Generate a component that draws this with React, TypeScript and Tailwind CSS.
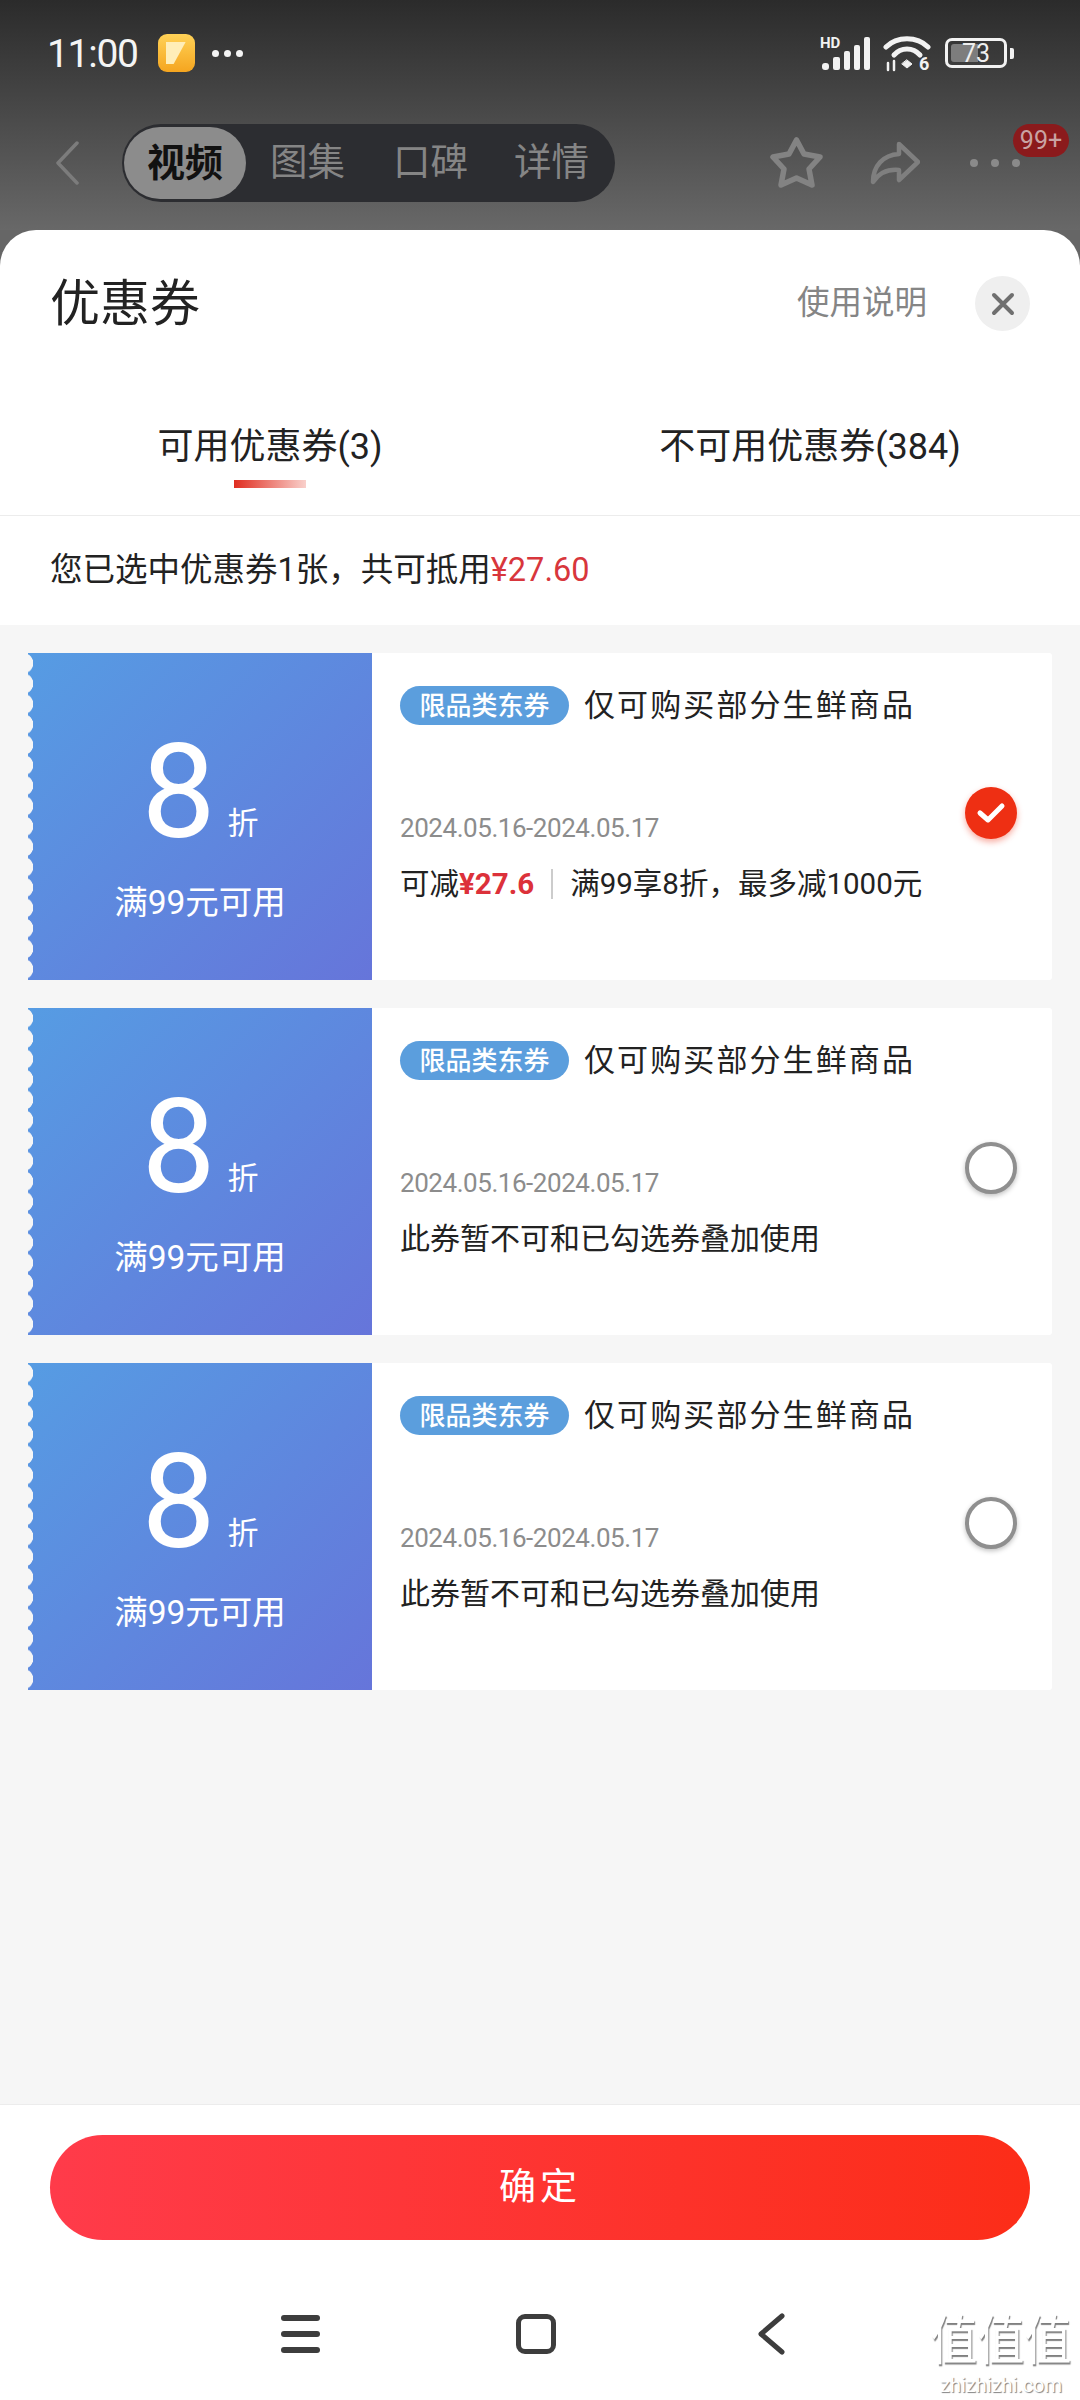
const coupons = [
  { id: 1, checked: true },
  { id: 2, checked: false },
  { id: 3, checked: false },
];

const StatusIcons = () => (
  <div className="flex items-center">
    <svg width="52" height="36" viewBox="0 0 52 36" className="mr-[11px]">
      <text x="0" y="13" fill="#f2f2f2" fontSize="15" fontWeight="700" fontFamily="Roboto, sans-serif">HD</text>
      <rect x="2" y="28" width="7" height="7" rx="3" fill="#f2f2f2" />
      <rect x="13" y="22" width="7" height="13" rx="2" fill="#f2f2f2" />
      <rect x="24" y="16" width="6" height="19" rx="2" fill="#f2f2f2" />
      <rect x="34" y="10" width="6" height="25" rx="2" fill="#f2f2f2" />
      <rect x="44" y="2" width="6" height="33" rx="2" fill="#f2f2f2" />
    </svg>
    <svg width="48" height="42" viewBox="0 0 48 42" className="mt-[6px] mr-[14px]" fill="none" stroke="#f2f2f2" strokeLinecap="round">
      <path d="M3 12 C14 1 34 1 45 12" strokeWidth="5" />
      <path d="M11 20 C18 12 30 12 37 20" strokeWidth="5" />
      <path d="M24 25 l5 4 -5 4 -5 -4z" fill="#f2f2f2" strokeWidth="1" />
      <path d="M5 28v7M11 26v9" strokeWidth="2.5" />
      <text x="36" y="35" fill="#f2f2f2" stroke="none" fontSize="18" fontWeight="700" fontFamily="Roboto, sans-serif">6</text>
    </svg>
    <div className="relative flex h-[30px] w-[62px] items-center justify-center rounded-[7px] border-[3px] border-[#f2f2f2]">
      <div className="absolute top-[3px] bottom-[3px] left-[3px] w-[27px] rounded-l-[3px] bg-[#7d7d7d]" />
      <span className="relative text-[25px] leading-none text-[#eeeeee]">73</span>
    </div>
    <div className="ml-[3px] h-[11px] w-[4px] rounded-r-[2px] bg-[#f2f2f2]" />
  </div>
);

const Coupon = ({ checked }: { checked: boolean }) => (
  <div className="flex h-[327px] rounded-[3px] bg-white">
    <div className="relative flex w-[344px] shrink-0 flex-col items-center bg-[linear-gradient(135deg,#569ce3,#6675da)] text-white">
      <div className="absolute top-0 bottom-0 left-0 w-[6px] bg-[radial-gradient(circle_at_-5px_50%,#f6f6f6_10px,transparent_10.5px)] bg-[length:6px_20.4px]" />
      <div className="mt-[74px] flex h-[130px] items-end">
        <span className="text-[132px] leading-[130px]">8</span>
        <span className="mb-[13px] ml-[12px] text-[31px] leading-[40px]">折</span>
      </div>
      <span className="mt-[24px] text-[33.5px] leading-[44px]">满99元可用</span>
    </div>
    <div className="flex flex-1 items-center">
      <div className="h-full flex-1 pt-[33px] pl-[28px]">
        <div className="flex items-center">
          <span className="flex h-[39px] w-[169px] items-center justify-center rounded-full bg-[#5b9edd] text-[26px] font-medium leading-none text-white">限品类东券</span>
          <span className="ml-[15px] text-[31px] leading-[39px] tracking-[2.1px] text-[#222222]">仅可购买部分生鲜商品</span>
        </div>
        <div className="mt-[85px] text-[26px] leading-[36px] tracking-[-0.45px] text-[#8c8c8c]">2024.05.16-2024.05.17</div>
        {checked ? (
          <div className="mt-[20px] flex items-center text-[29.5px] leading-[36px] text-[#222222]">
            <span>可减</span>
            <span className="font-bold text-[#dc313a]">¥27.6</span>
            <span className="mx-[17px] h-[30px] w-[2px] bg-[#cccccc]" />
            <span>满99享8折，最多减1000元</span>
          </div>
        ) : (
          <div className="mt-[20px] text-[30px] leading-[36px] text-[#222222]">此券暂不可和已勾选券叠加使用</div>
        )}
      </div>
      {checked ? (
        <div className="mr-[35px] mb-[8px] flex h-[52px] w-[52px] items-center justify-center rounded-full bg-[#ee2f13] shadow-[0_3px_6px_rgba(238,47,19,0.4)]">
          <svg width="30" height="24" viewBox="0 0 30 24" fill="none" stroke="#fff" strokeWidth="5" strokeLinecap="round" strokeLinejoin="round">
            <path d="M4 12 L12 19 L26 5" />
          </svg>
        </div>
      ) : (
        <div className="mr-[35px] mb-[8px] h-[52px] w-[52px] rounded-full border-[4px] border-[#8f8f8f] bg-white shadow-[0_2px_5px_rgba(0,0,0,0.25)]" />
      )}
    </div>
  </div>
);

export default function App() {
  return (
    <div className="relative flex h-[2400px] w-[1080px] flex-col overflow-hidden bg-[#666666] font-['Roboto','Noto_Sans_CJK_SC',sans-serif]">
      {/* top of the page behind the sheet */}
      <div className="h-[230px] shrink-0 bg-[linear-gradient(180deg,#2b2b2b,#686868)]">
        <div className="flex h-[106px] items-center justify-between pr-[66px] pl-[47px]">
          <div className="flex items-center">
            <span className="mt-[2px] text-[39px] leading-none tracking-[-1.3px] text-[#f4f4f4]">11:00</span>
            <div className="relative ml-[20px] h-[38px] w-[37px] overflow-hidden rounded-[9px] bg-[linear-gradient(180deg,#ffd257,#f5a51f)]">
              <div className="absolute top-[8px] left-[8px] h-[22px] w-[20px] bg-[#ffeeb8] [clip-path:polygon(0_0,100%_0,40%_100%,0_100%)]" />
            </div>
            <div className="ml-[17px] flex gap-[5px]">
              <div className="h-[7px] w-[7px] rounded-full bg-[#f4f4f4]" />
              <div className="h-[7px] w-[7px] rounded-full bg-[#f4f4f4]" />
              <div className="h-[7px] w-[7px] rounded-full bg-[#f4f4f4]" />
            </div>
          </div>
          <StatusIcons />
        </div>

        <div className="relative mt-[18px] flex h-[78px] items-center pl-[55px]">
          <svg width="24" height="44" viewBox="0 0 24 44" fill="none" stroke="#7c7c7c" strokeWidth="3.5" strokeLinecap="round" strokeLinejoin="round">
            <path d="M22 2 L3 22 L22 42" />
          </svg>
          <div className="ml-[43px] flex h-[78px] w-[493px] items-center rounded-full bg-[#2c2d31] pl-[2px] text-[37.5px] leading-none text-[#858585]">
            <span className="flex h-[72px] w-[122px] items-center justify-center rounded-full bg-[#8c8c8c] text-[38px] font-bold text-[#111111]">视频</span>
            <span className="ml-[24px]">图集</span>
            <span className="ml-[48px]">口碑</span>
            <span className="ml-[46px]">详情</span>
          </div>
          <svg width="55" height="54" viewBox="0 0 55 54" className="ml-[154px]" fill="none" stroke="#838383" strokeWidth="5.5" strokeLinejoin="round">
            <path d="M27.5 4 L35 18 L51 21 L40 33 L43 49 L27.5 42 L12 49 L15 33 L4 21 L20 18 Z" />
          </svg>
          <svg width="50" height="44" viewBox="0 0 50 44" className="ml-[46px]" fill="none" stroke="#7f7f7f" strokeWidth="4.5" strokeLinejoin="round" strokeLinecap="round">
            <path d="M29 3 L48 21 L29 39 L29 29 C18 28 9 32 3 41 C3 25 13 14 29 13 Z" />
          </svg>
          <div className="ml-[50px] flex gap-[13px]">
            <div className="h-[8px] w-[8px] rounded-full bg-[#8a8a8a]" />
            <div className="h-[8px] w-[8px] rounded-full bg-[#8a8a8a]" />
            <div className="h-[8px] w-[8px] rounded-full bg-[#8a8a8a]" />
          </div>
          <span className="absolute top-0 right-[11px] flex h-[33px] w-[56px] items-center justify-center rounded-full bg-[#8b1a1c] text-[25px] leading-none text-[#c9a3a3]">99+</span>
        </div>
      </div>

      {/* coupon sheet */}
      <div className="flex flex-1 flex-col overflow-hidden rounded-t-[36px] bg-white">
        <div className="flex h-[147px] shrink-0 items-center px-[50px]">
          <span className="text-[50px] leading-none text-[#222222]">优惠券</span>
          <span className="mr-[48px] ml-auto text-[32.5px] leading-none text-[#858585]">使用说明</span>
          <div className="flex h-[55px] w-[55px] items-center justify-center rounded-full bg-[#efefef]">
            <svg width="24" height="24" viewBox="0 0 24 24" fill="none" stroke="#6f6f6f" strokeWidth="4" strokeLinecap="round">
              <path d="M3 3 L21 21 M21 3 L3 21" />
            </svg>
          </div>
        </div>

        <div className="grid h-[139px] shrink-0 grid-cols-2 border-b border-[#ececec] text-[36px] leading-[48px] text-[#222222]">
          <div className="flex flex-col items-center pt-[46px]">
            <span>可用优惠券(3)</span>
            <div className="mt-[9px] h-[8px] w-[72px] bg-[linear-gradient(90deg,#e02d20,#f9d0cb)]" />
          </div>
          <div className="flex flex-col items-center pt-[46px]">
            <span>不可用优惠券(384)</span>
          </div>
        </div>

        <div className="flex h-[109px] shrink-0 items-center pl-[50px] text-[32.5px] leading-none text-[#222222]">
          <span>您已选中优惠券1张，共可抵用</span>
          <span className="text-[#d8363c]">¥27.60</span>
        </div>

        <div className="flex flex-1 flex-col gap-[28px] bg-[#f6f6f6] px-[28px] pt-[28px]">
          {coupons.map((c) => (
            <Coupon key={c.id} checked={c.checked} />
          ))}
        </div>

        <div className="h-[296px] shrink-0 border-t border-[#ececec] bg-white px-[50px] pt-[30px]">
          <div className="flex h-[105px] items-center justify-center rounded-full bg-[linear-gradient(90deg,#ff3b4a,#fc2d18)] text-[37px] leading-none tracking-[4px] text-white">确定</div>
          <div className="mt-[73px] flex items-center pl-[231px]">
            <div className="flex w-[39px] flex-col gap-[10px]">
              <div className="h-[6px] rounded-full bg-[#3d3d3d]" />
              <div className="h-[6px] rounded-full bg-[#3d3d3d]" />
              <div className="h-[6px] rounded-full bg-[#3d3d3d]" />
            </div>
            <div className="ml-[196px] h-[40px] w-[40px] rounded-[9px] border-[5px] border-[#3d3d3d]" />
            <svg width="28" height="42" viewBox="0 0 28 42" className="ml-[201px]" fill="none" stroke="#3d3d3d" strokeWidth="5" strokeLinecap="round" strokeLinejoin="round">
              <path d="M25 3 L4 21 L25 39" />
            </svg>
          </div>
        </div>
      </div>

      {/* site watermark */}
      <div className="absolute top-[2311px] left-[930px] flex w-[142px] flex-col items-center text-white [text-shadow:1px_1px_1px_#808080]">
        <span className="origin-top scale-y-[1.15] text-[47px] leading-[54px]">值值值</span>
        <span className="mt-[10px] text-[20px] leading-[20px]">zhizhizhi.com</span>
      </div>
    </div>
  );
}
